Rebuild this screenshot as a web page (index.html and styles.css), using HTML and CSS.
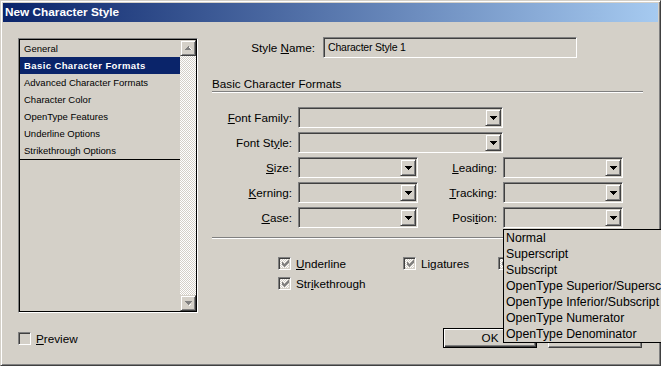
FILE: index.html
```html
<!DOCTYPE html>
<html>
<head>
    <title>New Character Style</title>
    <link rel="stylesheet" href="styles.css">
</head>
<body>
<div class="window">
    <div class="titlebar">New Character Style</div>
    <div class="content">
        <div class="main">
            <div class="side">
                <div class="listbox">
                    <div class="listbox-in">
                        <ul class="pages">
                            <li>General</li>
                            <li class="selected">Basic Character Formats</li>
                            <li>Advanced Character Formats</li>
                            <li>Character Color</li>
                            <li>OpenType Features</li>
                            <li>Underline Options</li>
                            <li>Strikethrough Options</li>
                        </ul>
                        <div class="scrollbar">
                            <div class="sb-btn">
                                <svg width="7" height="5" viewBox="0 0 7 5"><path fill="#fff" d="M4 1h1v1H4zM5 2h1v1H5zM6 3h1v1H6z"/><path fill="#808080" d="M3 0h1v1H3zM2 1h2v1H2zM1 2h4v1H1zM0 3h6v1H0z"/></svg>
                            </div>
                            <div class="sb-track"></div>
                            <div class="sb-btn">
                                <svg width="7" height="5" viewBox="0 0 7 5"><path fill="#808080" d="M0 0h7v1H0zM1 1h5v1H1zM2 2h3v1H2zM3 3h1v1H3z"/><path fill="#fff" d="M4 4h1v1H4zM5 3h1v1H5z"/></svg>
                            </div>
                        </div>
                    </div>
                </div>
            </div>

            <div class="panel">
                <div class="name-row">
                    <span class="name-label">Style <u>N</u>ame:</span>
                    <div class="textbox">Character Style 1</div>
                </div>

                <div class="section-title">Basic Character Formats</div>

                <div class="fields">
                    <span class="fl first"><u>F</u>ont Family:</span>
                    <div class="combo span2"><div class="combo-btn"><svg width="7" height="4" viewBox="0 0 7 4"><path d="M0 0h7v1H0zM1 1h5v1H1zM2 2h3v1H2zM3 3h1v1H3z"/></svg></div></div>

                    <span class="fl first">Font St<u>y</u>le:</span>
                    <div class="combo span2"><div class="combo-btn"><svg width="7" height="4" viewBox="0 0 7 4"><path d="M0 0h7v1H0zM1 1h5v1H1zM2 2h3v1H2zM3 3h1v1H3z"/></svg></div></div>

                    <span class="fl first"><u>S</u>ize:</span>
                    <div class="combo"><div class="combo-btn"><svg width="7" height="4" viewBox="0 0 7 4"><path d="M0 0h7v1H0zM1 1h5v1H1zM2 2h3v1H2zM3 3h1v1H3z"/></svg></div></div>
                    <span class="fl"><u>L</u>eading:</span>
                    <div class="combo"><div class="combo-btn"><svg width="7" height="4" viewBox="0 0 7 4"><path d="M0 0h7v1H0zM1 1h5v1H1zM2 2h3v1H2zM3 3h1v1H3z"/></svg></div></div>

                    <span class="fl first"><u>K</u>erning:</span>
                    <div class="combo"><div class="combo-btn"><svg width="7" height="4" viewBox="0 0 7 4"><path d="M0 0h7v1H0zM1 1h5v1H1zM2 2h3v1H2zM3 3h1v1H3z"/></svg></div></div>
                    <span class="fl"><u>T</u>racking:</span>
                    <div class="combo"><div class="combo-btn"><svg width="7" height="4" viewBox="0 0 7 4"><path d="M0 0h7v1H0zM1 1h5v1H1zM2 2h3v1H2zM3 3h1v1H3z"/></svg></div></div>

                    <span class="fl first"><u>C</u>ase:</span>
                    <div class="combo"><div class="combo-btn"><svg width="7" height="4" viewBox="0 0 7 4"><path d="M0 0h7v1H0zM1 1h5v1H1zM2 2h3v1H2zM3 3h1v1H3z"/></svg></div></div>
                    <span class="fl">Posi<u>t</u>ion:</span>
                    <div class="combo open">
                        <div class="combo-btn"><svg width="7" height="4" viewBox="0 0 7 4"><path d="M0 0h7v1H0zM1 1h5v1H1zM2 2h3v1H2zM3 3h1v1H3z"/></svg></div>
                        <ul class="dropdown">
                            <li>Normal</li>
                            <li>Superscript</li>
                            <li>Subscript</li>
                            <li>OpenType Superior/Superscript</li>
                            <li>OpenType Inferior/Subscript</li>
                            <li>OpenType Numerator</li>
                            <li>OpenType Denominator</li>
                        </ul>
                    </div>
                </div>

                <div class="sep"></div>

                <div class="checks">
                    <label class="check"><span class="cb on"><svg width="7" height="7" viewBox="0 0 7 7"><path fill="#808080" d="M6 0h1v1H6zM5 1h2v1H5zM0 2h1v1H0zM4 2h3v1H4zM0 3h2v1H0zM3 3h3v1H3zM0 4h5v1H0zM1 5h3v1H1zM2 6h1v1H2z"/></svg></span><span><u>U</u>nderline</span></label>
                    <label class="check"><span class="cb on"><svg width="7" height="7" viewBox="0 0 7 7"><path fill="#808080" d="M6 0h1v1H6zM5 1h2v1H5zM0 2h1v1H0zM4 2h3v1H4zM0 3h2v1H0zM3 3h3v1H3zM0 4h5v1H0zM1 5h3v1H1zM2 6h1v1H2z"/></svg></span><span>Li<u>g</u>atures</span></label>
                    <label class="check"><span class="cb on"><svg width="7" height="7" viewBox="0 0 7 7"><path fill="#808080" d="M6 0h1v1H6zM5 1h2v1H5zM0 2h1v1H0zM4 2h3v1H4zM0 3h2v1H0zM3 3h3v1H3zM0 4h5v1H0zM1 5h3v1H1zM2 6h1v1H2z"/></svg></span><span>No Break</span></label>
                    <label class="check"><span class="cb on"><svg width="7" height="7" viewBox="0 0 7 7"><path fill="#808080" d="M6 0h1v1H6zM5 1h2v1H5zM0 2h1v1H0zM4 2h3v1H4zM0 3h2v1H0zM3 3h3v1H3zM0 4h5v1H0zM1 5h3v1H1zM2 6h1v1H2z"/></svg></span><span>Str<u>i</u>kethrough</span></label>
                </div>
            </div>
        </div>

        <div class="footer">
            <label class="check"><span class="cb"></span><span><u>P</u>review</span></label>
            <div class="buttons">
                <div class="btn default">OK</div>
                <div class="btn">Cancel</div>
            </div>
        </div>
    </div>
</div>
</body>
</html>
```

FILE: styles.css
```css
body {
    margin: 0;
    width: 661px;
    height: 366px;
    overflow: hidden;
    font-family: "Liberation Sans", Arial, sans-serif;
    font-size: 11.7px;
    color: #000;
    background: #d4d0c8;
}
u {
    text-decoration-thickness: 1px;
    text-underline-offset: 1px;
}

.window {
    width: 661px;
    height: 366px;
    box-sizing: border-box;
    border: 1px solid;
    border-color: #d4d0c8 #404040 #404040 #d4d0c8;
    box-shadow: inset 1px 1px #fff, inset -1px -1px #808080;
    padding: 2px;
    background: #d4d0c8;
}
.titlebar {
    height: 19px;
    line-height: 19px;
    padding-left: 2px;
    background: linear-gradient(to right, #0a246a, #a6caf0);
    color: #fff;
    font-weight: bold;
    font-size: 11.8px;
}
.content {
    padding: 15px 0 0 15px;
}
.main {
    display: flex;
    height: 276px;
}

/* left page list */
.side {
    width: 180px;
    margin-top: 1px;
}
.listbox {
    height: 275px;
    box-sizing: border-box;
    border: 1px solid;
    border-color: #808080 #fff #fff #808080;
}
.listbox-in {
    height: 100%;
    box-sizing: border-box;
    border: 1px solid #000;
    display: flex;
}
.pages {
    list-style: none;
    margin: 0;
    padding: 0;
    width: 160px;
    align-self: flex-start;
    border-bottom: 1px solid #000;
    font-size: 9.5px;
}
.pages li {
    height: 17px;
    line-height: 17px;
    padding-left: 4px;
    white-space: nowrap;
}
.pages li.selected {
    background: #0a246a;
    color: #fff;
    font-weight: bold;
    letter-spacing: 0.4px;
}
.scrollbar {
    width: 16px;
    display: flex;
    flex-direction: column;
}
.sb-track {
    flex: 1;
    background: repeating-conic-gradient(#fff 0 25%, #d4d0c8 0 50%) 0 0 / 2px 2px;
}
.sb-btn {
    height: 16px;
    box-sizing: border-box;
    border: 1px solid;
    border-color: #d4d0c8 #404040 #404040 #d4d0c8;
    box-shadow: inset 1px 1px #fff, inset -1px -1px #808080;
    background: #d4d0c8;
    display: flex;
    align-items: center;
    justify-content: center;
}

/* right panel */
.panel {
    width: 431px;
    margin-left: 14px;
}
.name-row {
    display: flex;
    align-items: center;
    gap: 8px;
}
.name-label {
    width: 103px;
    text-align: right;
}
.textbox {
    width: 254px;
    height: 21px;
    box-sizing: border-box;
    border: 1px solid;
    border-color: #808080 #fff #fff #808080;
    box-shadow: inset 1px 1px #404040, inset -1px -1px #d4d0c8;
    padding-left: 4px;
    line-height: 19px;
    font-size: 10.5px;
    letter-spacing: -0.2px;
}
.section-title {
    margin-top: 19px;
    line-height: 14px;
    border-bottom: 1px solid #808080;
    box-shadow: 0 1px #fff;
}
.fields {
    margin-top: 15px;
    display: grid;
    grid-template-columns: 86px 120px 85px 120px;
    grid-auto-rows: 21px;
    row-gap: 4px;
    align-items: center;
}
.fl {
    text-align: right;
    padding-right: 6px;
    white-space: nowrap;
}
.fl.first {
    grid-column: 1;
}
.combo {
    position: relative;
    height: 21px;
    box-sizing: border-box;
    border: 1px solid;
    border-color: #808080 #fff #fff #808080;
    box-shadow: inset 1px 1px #404040, inset -1px -1px #d4d0c8;
    padding: 1px;
    display: flex;
    justify-content: flex-end;
}
.combo.span2 {
    grid-column: 2 / 4;
}
.combo-btn {
    width: 16px;
    height: 17px;
    box-sizing: border-box;
    border: 1px solid;
    border-color: #d4d0c8 #404040 #404040 #d4d0c8;
    box-shadow: inset 1px 1px #fff, inset -1px -1px #808080;
    background: #d4d0c8;
    display: flex;
    align-items: center;
    justify-content: center;
}
.dropdown {
    position: absolute;
    top: 21px;
    left: -1px;
    z-index: 10;
    width: 180px;
    margin: 0;
    padding: 0;
    list-style: none;
    border: 1px solid #000;
    background: #d4d0c8;
    font-size: 12.3px;
}
.dropdown li {
    height: 16px;
    line-height: 16px;
    padding-left: 2px;
    white-space: nowrap;
}
.sep {
    margin-top: 9px;
    border-top: 1px solid #808080;
    box-shadow: 0 1px #fff;
}
.checks {
    margin-top: 15px;
    padding-left: 66px;
    display: grid;
    grid-template-columns: 125px 95px auto;
    grid-auto-rows: 20px;
    align-items: center;
}
.check {
    display: flex;
    align-items: center;
    gap: 5px;
    white-space: nowrap;
}
.cb {
    width: 13px;
    height: 13px;
    box-sizing: border-box;
    border: 1px solid;
    border-color: #808080 #fff #fff #808080;
    box-shadow: inset 1px 1px #404040, inset -1px -1px #d4d0c8;
    background: #d4d0c8;
    display: flex;
    align-items: center;
    justify-content: center;
}
.cb.on {
    background: repeating-conic-gradient(#fff 0 25%, #d4d0c8 0 50%) 0 0 / 2px 2px;
}
.cb svg {
    margin: 1px 0 0 1px;
}

/* footer */
.footer {
    margin-top: 15px;
    margin-right: 16px;
    height: 20px;
    display: flex;
    align-items: center;
    justify-content: space-between;
}
.buttons {
    display: flex;
    gap: 11px;
}
.btn {
    width: 94px;
    height: 20px;
    box-sizing: border-box;
    border: 1px solid;
    border-color: #fff #404040 #404040 #fff;
    box-shadow: inset -1px -1px #808080;
    text-align: center;
    line-height: 18px;
}
.btn.default {
    border-color: #000;
    box-shadow: inset 1px 1px #fff, inset -1px -1px #404040, inset -2px -2px #808080;
}
```
